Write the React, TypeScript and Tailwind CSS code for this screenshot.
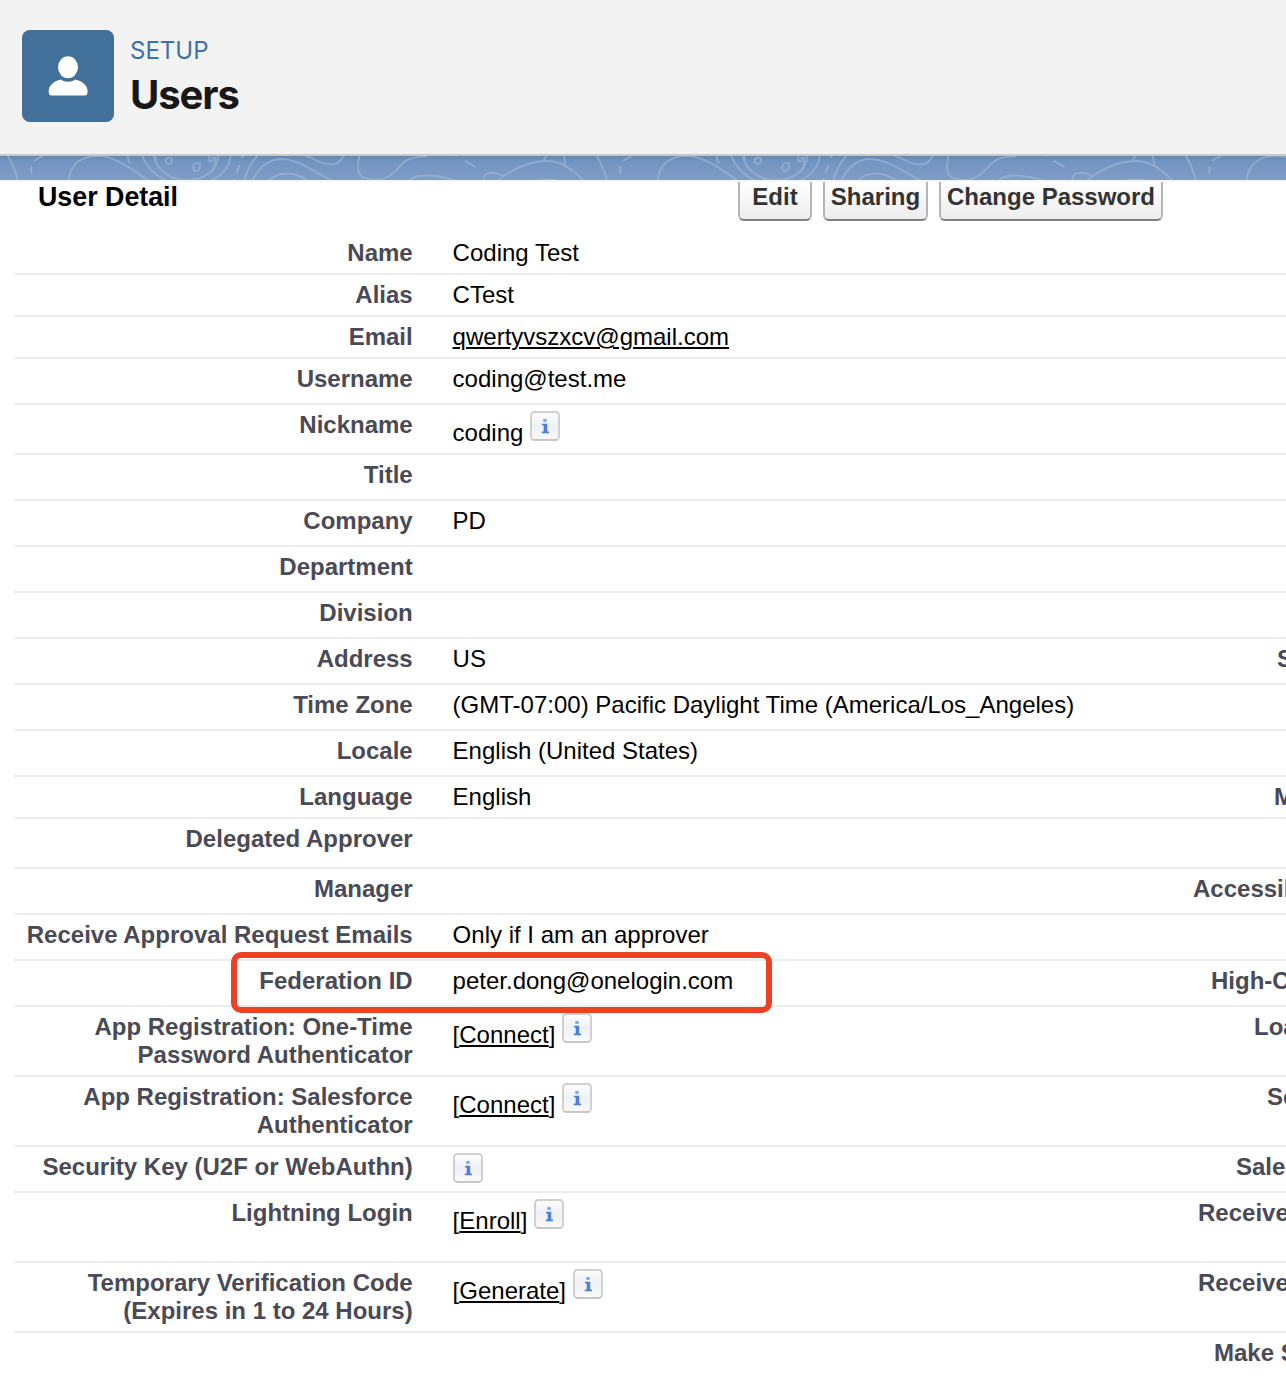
import type { ReactNode } from 'react';

type Row = {
  label: ReactNode;
  value?: string;
  kind?: 'text' | 'link' | 'action';
  info?: boolean;
  height: string;
  right?: string;
  rightX?: string;
};

const rows: Row[] = [
  { label: 'Name', value: 'Coding Test', height: 'h-[42px]' },
  { label: 'Alias', value: 'CTest', height: 'h-[42px]' },
  { label: 'Email', value: 'qwertyvszxcv@gmail.com', kind: 'link', height: 'h-[42px]' },
  { label: 'Username', value: 'coding@test.me', height: 'h-[46px]' },
  { label: 'Nickname', value: 'coding', info: true, height: 'h-[50px]' },
  { label: 'Title', height: 'h-[46px]' },
  { label: 'Company', value: 'PD', height: 'h-[46px]' },
  { label: 'Department', height: 'h-[46px]' },
  { label: 'Division', height: 'h-[46px]' },
  { label: 'Address', value: 'US', height: 'h-[46px]', right: 'S', rightX: 'w-[9px]' },
  { label: 'Time Zone', value: '(GMT-07:00) Pacific Daylight Time (America/Los_Angeles)', height: 'h-[46px]' },
  { label: 'Locale', value: 'English (United States)', height: 'h-[46px]' },
  { label: 'Language', value: 'English', height: 'h-[42px]', right: 'M', rightX: 'w-[12px]' },
  { label: 'Delegated Approver', height: 'h-[50px]' },
  { label: 'Manager', height: 'h-[46px]', right: 'Accessibility', rightX: 'w-[93px]' },
  { label: 'Receive Approval Request Emails', value: 'Only if I am an approver', height: 'h-[46px]' },
  { label: 'Federation ID', value: 'peter.dong@onelogin.com', height: 'h-[46px]', right: 'High-Contrast', rightX: 'w-[75px]' },
  {
    label: <>App Registration: One-Time<br />Password Authenticator</>,
    value: 'Connect', kind: 'action', info: true, height: 'h-[70px]', right: 'Load', rightX: 'w-[32px]',
  },
  {
    label: <>App Registration: Salesforce<br />Authenticator</>,
    value: 'Connect', kind: 'action', info: true, height: 'h-[70px]', right: 'Send', rightX: 'w-[19px]',
  },
  { label: 'Security Key (U2F or WebAuthn)', info: true, height: 'h-[46px]', right: 'Salesforce', rightX: 'w-[50px]' },
  { label: 'Lightning Login', value: 'Enroll', kind: 'action', info: true, height: 'h-[70px]', right: 'Receive', rightX: 'w-[88px]' },
  {
    label: <>Temporary Verification Code<br />(Expires in 1 to 24 Hours)</>,
    value: 'Generate', kind: 'action', info: true, height: 'h-[70px]', right: 'Receive', rightX: 'w-[88px]',
  },
];

function InfoIcon() {
  return (
    <svg width="30" height="30" viewBox="0 0 30 30" className="shrink-0">
      <defs>
        <linearGradient id="infoFill" x1="0" y1="0" x2="0" y2="1">
          <stop offset="0" stopColor="#fdfdfd" />
          <stop offset="0.5" stopColor="#eff0f4" />
          <stop offset="1" stopColor="#fafafa" />
        </linearGradient>
      </defs>
      <rect x="1" y="1" width="28" height="28" rx="3.5" fill="url(#infoFill)" stroke="#d0d0d0" strokeWidth="2" />
      <path d="M3 28.8H27" stroke="#b9b9b9" strokeWidth="1.4" opacity="0.5" />
      <ellipse cx="15" cy="9.4" rx="2" ry="1.6" fill="#7ea6e6" />
      <path d="M12 12.8H17.2V20.4H19V22.2H11.8V20.4H13.7V14.6H12Z" fill="#4a80d8" />
    </svg>
  );
}

function Value({ row }: { row: Row }) {
  const offset = row.info ? 'pt-[14px]' : 'pt-[6px]';
  return (
    <div className="flex flex-1 items-start pl-[39px] text-black">
      {row.value && (
        <span className={`${offset} -ml-[0.4px] whitespace-nowrap`}>
          {row.kind === 'action' ? (
            <>
              [<span className="underline decoration-2 underline-offset-[2px] [text-decoration-skip-ink:none]">{row.value}</span>]
            </>
          ) : row.kind === 'link' ? (
            <span className="underline decoration-2 underline-offset-[2px]">{row.value}</span>
          ) : (
            row.value
          )}
        </span>
      )}
      {row.info && (
        <span className={row.value ? 'ml-[6.6px] pt-[6px]' : 'pt-[6px]'}>
          <InfoIcon />
        </span>
      )}
    </div>
  );
}

function Button({ children, width }: { children: string; width: string }) {
  return (
    <button
      className={`${width} flex h-[39px] items-start justify-center whitespace-nowrap rounded-b-[6px] border-2 border-t-0 border-[#b5b5b5] border-b-[#7f7f7f] bg-gradient-to-b from-white to-[#ededed] pt-px text-[24px] font-bold leading-[28px] text-[#333]`}
    >
      {children}
    </button>
  );
}

// Decorative contour-line band that repeats under the page header.
function ContourBand() {
  return (
    <svg width="1286" height="24" viewBox="0 33 3858 72" className="block">
      <defs>
        <linearGradient id="bandFill" x1="0" y1="0" x2="0" y2="1">
          <stop offset="0" stopColor="#6686ae" />
          <stop offset="0.22" stopColor="#7294c1" />
          <stop offset="0.5" stopColor="#7897c2" />
          <stop offset="1" stopColor="#7e9cc6" />
        </linearGradient>
        <g id="contours" fill="none" stroke="#a4bbdc" strokeWidth="5.5" strokeLinecap="round">
          <path d="M22 30Q44 66 54 108" />
          <path d="M104 46L126 34M94 66V84" />
          <path d="M205 108C212 54 245 28 310 34C362 44 402 78 448 108" />
          <path d="M383 30Q383 45 389 54" />
          <path d="M425 30C440 68 466 92 500 108M460 30C470 76 512 104 555 106C610 104 650 82 655 30" />
          <path d="M692 30C690 70 660 96 630 108" />
          <path d="M467 36V50" />
          <path d="M497 44C503 34 519 36 516 48C512 60 496 60 497 44ZM579 67C583 51 603 49 600 64C597 82 579 84 579 67Z" />
          <path d="M628 34V48H638V38H646V54L638 78" />
          <path d="M726 36L734 28M718 62L710 82M703 102L700 110" />
          <path d="M732 108C740 78 752 54 774 30M756 108C778 64 805 44 840 42C900 42 952 88 998 108" />
          <path d="M805 108C834 80 878 76 925 108" />
          <path d="M912 30C952 44 962 60 1002 58C1018 56 1024 44 1034 30" />
          <path d="M1078 30C1074 56 1068 84 1090 98C1130 112 1164 104 1192 72C1216 44 1228 36 1280 34" />
          <path d="M1228 108C1244 86 1300 86 1370 108" />
          <path d="M1368 32H1373M1396 48L1424 64" />
          <path d="M1450 108C1450 76 1480 80 1510 92M1490 108C1540 70 1600 42 1660 49C1696 56 1728 82 1754 110" />
          <path d="M1630 48L1640 30M1692 34L1696 64" />
          <path d="M1600 109Q1644 98 1680 109" />
        </g>
      </defs>
      <rect y="33" width="3858" height="72" fill="url(#bandFill)" />
      <g opacity="0.6">
        <use href="#contours" />
        <use href="#contours" x="1767" />
        <use href="#contours" x="3534" />
      </g>
    </svg>
  );
}

export default function App() {
  return (
    <div className="relative h-[1388px] w-[1286px] overflow-hidden bg-white font-['Liberation_Sans',Arial,sans-serif] text-[24px] leading-[28px]">
      <header className="flex h-[156px] items-start border-b-2 border-[#c9c9c9] bg-[#f3f3f3] pl-[22px] pt-[30px]">
        <div className="h-[92px] w-[92px] rounded-[8px] bg-[#41719b]">
          <svg width="92" height="92" viewBox="0 0 92 92" fill="#fff">
            <ellipse cx="46" cy="37.3" rx="10" ry="11" />
            <path d="M39 49.6C42 52.5 50 52.5 53 49.6C60 51 65.6 55.6 65.6 61V62.2Q65.6 65.6 62 65.6H30.4Q26.7 65.6 26.7 62.2V61C26.7 55.6 32 51 39 49.6Z" />
          </svg>
        </div>
        <div className="flex flex-col pl-4 font-['Inter',sans-serif]">
          <span className="pt-[6px] text-[24px] leading-[30px] text-[#3b71a8]">SETUP</span>
          <h1 className="mt-[4px] text-[40px] font-bold leading-[50px] tracking-[-1.1px] text-[#181818]">Users</h1>
        </div>
      </header>
      <ContourBand />
      <div className="h-[2px] bg-[#f5f7fa]" />

      <div className="flex h-[51px] items-start">
        <h2 className="w-[738px] pl-[38px] pt-px text-[26.8px] font-bold leading-[28px] text-black">User Detail</h2>
        <div className="flex gap-[11px]">
          <Button width="w-[74px]">Edit</Button>
          <Button width="w-[105px]">Sharing</Button>
          <Button width="w-[224px]">Change Password</Button>
        </div>
      </div>

      <div className="pl-[14px]">
        {rows.map((row, i) => (
          <div key={i} className={`${row.height} flex border-b-2 border-[#ececec]`}>
            <div className="w-[400px] shrink-0 whitespace-nowrap pr-[1.3px] pt-[6px] text-right font-bold text-[#4a4a56]">
              {row.label}
            </div>
            <Value row={row} />
            {row.right && (
              <div className={`${row.rightX} shrink-0 overflow-hidden whitespace-nowrap pt-[6px] font-bold text-[#4a4a56]`}>
                {row.right}
              </div>
            )}
          </div>
        ))}
        <div className="flex justify-end">
          <div className="w-[72px] overflow-hidden whitespace-nowrap pt-[6px] font-bold text-[#4a4a56]">Make Setup</div>
        </div>
      </div>

      {/* Highlight drawn over the Federation ID row */}
      <div className="absolute left-[231px] top-[952px] h-[61px] w-[541px] rounded-[10px] border-[6px] border-[#ec4027]" />
    </div>
  );
}
